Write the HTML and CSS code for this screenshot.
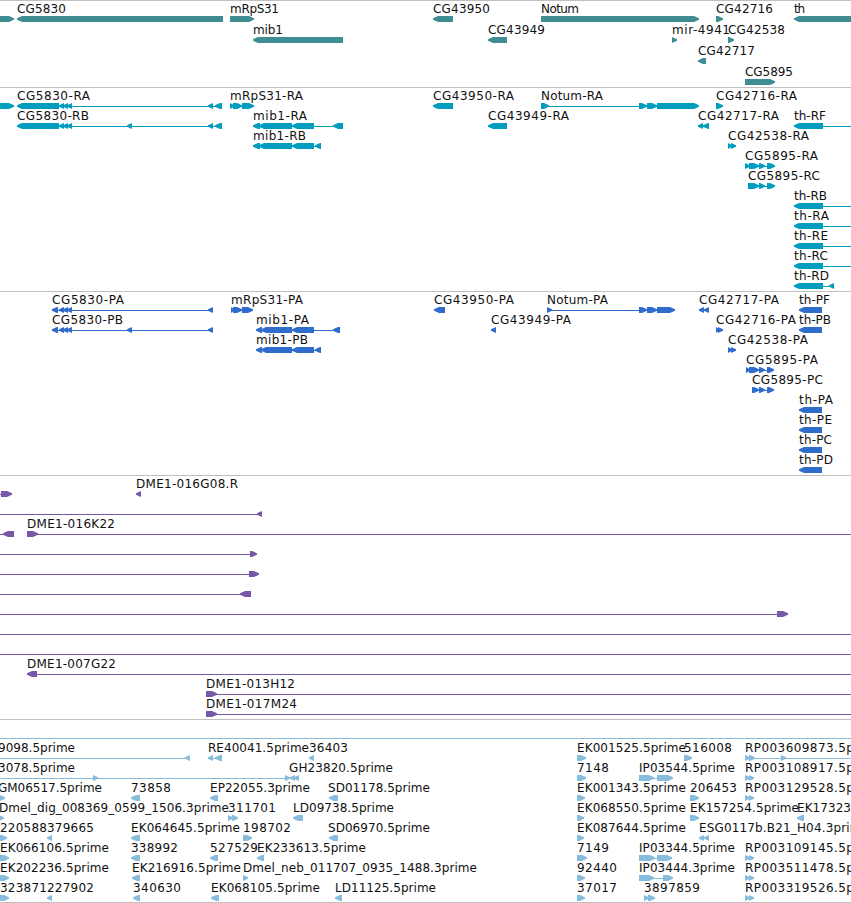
FILE: index.html
```html
<!DOCTYPE html>
<html lang="en">
<head>
    <meta charset="UTF-8">
    <meta name="viewport" content="width=device-width, initial-scale=1.0">
    <title>Genome Tracks</title>
    <link rel="stylesheet" href="styles.css">
    <script src="tracks.js" defer></script>
</head>

<body>
    <main id="track-list">
        <section class="track genes" id="genes"></section>
        <section class="track transcripts" id="transcripts"></section>
        <section class="track proteins" id="proteins"></section>
        <section class="track bacs" id="bacs"></section>
        <section class="track ests" id="ests"></section>
    </main>
</body>
</html>
```

FILE: styles.css
```css
html {
    background-color: white;
    color: black;
    font-family: "DejaVu Sans", sans-serif;
    font-size: 12px;
}

body {
    margin: 0;
    padding: 0;
}

#track-list {
    display: flex;
    flex-direction: column;
    width: 851px;
    overflow: hidden;
}

.track {
    box-sizing: border-box;
    border-top: 1px solid #c0c0c0;
    overflow: hidden;
}

.track svg {
    display: block;
    width: 100%;
    height: 100%;
}

.track text {
    fill: #111;
}

.genes {
    height: 87px;
    fill: #3f8c92;
}

.transcripts {
    height: 204px;
    fill: #009dbf;
}

.proteins {
    height: 184px;
    fill: #306ccb;
}

.bacs {
    height: 244px;
    fill: #7757a7;
}

.ests {
    height: 184px;
    fill: #88bcdf;
    border-bottom: 1px solid #c0c0c0;
}
```

FILE: tracks.js
```js
// feature: [row, strand, name, label start, label end, blocks]
// blocks outside of the view keep the connecting line running to the edge
const L = [-20, -12];
const R = [870, 880];

const genes = [
    [0, '+', '', 0, 0, [[-20, 14]]],
    [0, '-', 'CG5830', 17, 66, [[17, 223]]],
    [0, '+', 'mRpS31', 230, 279, [[230, 254]]],
    [0, '-', 'CG43950', 433, 490, [[433, 453]]],
    [0, '+', 'Notum', 541, 579, [[541, 699]]],
    [0, '+', 'CG42716', 716, 773, [[716, 723]]],
    [0, '-', 'th', 794, 805, [[794, 870]]],
    [1, '-', 'mib1', 253, 283, [[253, 343]]],
    [1, '-', 'CG43949', 488, 545, [[488, 507]]],
    [1, '+', 'mir-4941', 672, 730, [[672, 677]]],
    [1, '+', 'CG42538', 728, 785, [[728, 734]]],
    [2, '-', 'CG42717', 698, 755, [[698, 706]]],
    [3, '+', 'CG5895', 745, 793, [[745, 775]]]
];

const transcripts = [
    [0, '+', '', 0, 0, [[-20, 14]]],
    [0, '-', 'CG5830-RA', 17, 90, [[17, 59], [59, 64], [63, 68], [67, 72], [208, 213], [215, 222]]],
    [0, '+', 'mRpS31-RA', 230, 303, [[230, 234], [233, 242], [242, 254]]],
    [0, '-', 'CG43950-RA', 433, 514, [[433, 453]]],
    [0, '+', 'Notum-RA', 541, 603, [[541, 549], [639, 647], [647, 657], [657, 699]]],
    [0, '+', 'CG42716-RA', 716, 797, [[716, 723]]],
    [1, '-', 'CG5830-RB', 17, 89, [[17, 59], [59, 64], [63, 68], [67, 72], [127, 132], [208, 213], [215, 222]]],
    [1, '-', 'mib1-RA', 253, 307, [[253, 260], [259, 292], [292, 314], [333, 343]]],
    [1, '-', 'CG43949-RA', 488, 569, [[488, 507]]],
    [1, '-', 'CG42717-RA', 698, 779, [[698, 703], [703, 709]]],
    [1, '-', 'th-RF', 794, 826, [[794, 823], R]],
    [2, '-', 'mib1-RB', 253, 306, [[253, 260], [259, 292], [292, 314], [315, 321]]],
    [2, '+', 'CG42538-RA', 728, 809, [[728, 732], [731, 736]]],
    [3, '+', 'CG5895-RA', 745, 818, [[745, 750], [749, 759], [759, 765], [767, 775]]],
    [4, '+', 'CG5895-RC', 748, 820, [[748, 759], [759, 765], [767, 775]]],
    [5, '-', 'th-RB', 794, 827, [[794, 823], R]],
    [6, '-', 'th-RA', 794, 829, [[794, 823], R]],
    [7, '-', 'th-RE', 794, 828, [[794, 823], R]],
    [8, '-', 'th-RC', 794, 828, [[794, 823], R]],
    [9, '-', 'th-RD', 794, 829, [[794, 823], [829, 834]]]
];

const proteins = [
    [0, '-', 'CG5830-PA', 52, 124, [[52, 58], [59, 64], [63, 68], [67, 72], [208, 213]]],
    [0, '+', 'mRpS31-PA', 231, 303, [[231, 234], [233, 242], [242, 253]]],
    [0, '-', 'CG43950-PA', 434, 514, [[434, 445]]],
    [0, '+', 'Notum-PA', 547, 608, [[547, 552], [639, 647], [647, 657], [657, 675]]],
    [0, '-', 'CG42717-PA', 699, 779, [[699, 704], [704, 709]]],
    [0, '-', 'th-PF', 799, 830, [[799, 822]]],
    [1, '-', 'CG5830-PB', 52, 123, [[52, 58], [59, 64], [63, 68], [67, 72], [127, 132], [208, 213]]],
    [1, '-', 'mib1-PA', 256, 309, [[256, 262], [261, 292], [292, 314], [333, 340]]],
    [1, '-', 'CG43949-PA', 491, 571, [[491, 496]]],
    [1, '+', 'CG42716-PA', 716, 796, [[716, 719], [718, 723]]],
    [1, '-', 'th-PB', 799, 831, [[799, 822]]],
    [2, '-', 'mib1-PB', 256, 308, [[256, 262], [261, 292], [292, 314], [315, 321]]],
    [2, '+', 'CG42538-PA', 728, 808, [[728, 732], [731, 736]]],
    [3, '+', 'CG5895-PA', 746, 818, [[746, 750], [749, 759], [759, 765], [767, 774]]],
    [4, '+', 'CG5895-PC', 752, 823, [[752, 759], [759, 765], [767, 774]]],
    [5, '-', 'th-PA', 799, 833, [[799, 822]]],
    [6, '-', 'th-PE', 799, 832, [[799, 822]]],
    [7, '-', 'th-PC', 799, 832, [[799, 822]]],
    [8, '-', 'th-PD', 799, 833, [[799, 822]]]
];

const bacs = [
    [0, '+', '', 0, 0, [L, [1, 12]]],
    [0, '-', 'DME1-016G08.R', 136, 238, [[136, 141]]],
    [1, '-', '', 0, 0, [L, [257, 262]]],
    [2, '-', '', 0, 0, [L, [3, 14]]],
    [2, '+', 'DME1-016K22', 27, 115, [[27, 38], R]],
    [3, '+', '', 0, 0, [L, [250, 257]]],
    [4, '+', '', 0, 0, [L, [249, 259]]],
    [5, '-', '', 0, 0, [L, [240, 251]]],
    [6, '+', '', 0, 0, [L, [777, 788]]],
    [7, '+', '', 0, 0, [L, R]],
    [8, '+', '', 0, 0, [L, R]],
    [9, '-', 'DME1-007G22', 27, 116, [[27, 37], R]],
    [10, '+', 'DME1-013H12', 206, 295, [[206, 217], R]],
    [11, '+', 'DME1-017M24', 206, 297, [[206, 217], R]]
];

const ests = [
    [0, '+', '', 0, 0, [L, R]],

    [1, '-', '9098.5prime', -2, 75, [L, [185, 190]]],
    [1, '-', 'RE40041.5prime', 208, 309, [[208, 213], [215, 222]]],
    [1, '-', '36403', 309, 348, [[309, 314]]],
    [1, '+', 'EK001525.5prime', 577, 686, [[577, 586]]],
    [1, '+', '516008', 684, 732, [[684, 692]]],
    [1, '+', 'RP003609873.5prime', 745, 883, [[745, 750], [749, 755], [781, 786], R]],

    [2, '+', '3078.5prime', -2, 75, [L, [93, 98], [285, 290]]],
    [2, '-', 'GH23820.5prime', 289, 393, [[290, 295], [294, 299]]],
    [2, '+', '7148', 577, 609, [[577, 586]]],
    [2, '+', 'IP03544.5prime', 639, 735, [[639, 654], [657, 673]]],
    [2, '+', 'RP003108917.5prime', 745, 883, [[745, 750], [749, 754]]],

    [3, '+', 'GM06517.5prime', -2, 102, [[-1, 5]]],
    [3, '-', '73858', 131, 171, [[131, 140]]],
    [3, '-', 'EP22055.3prime', 210, 310, [[210, 218]]],
    [3, '-', 'SD01178.5prime', 328, 430, [[329, 338]]],
    [3, '+', 'EK001343.5prime', 577, 686, [[577, 585]]],
    [3, '+', '206453', 690, 737, [[690, 699]]],
    [3, '+', 'RP003129528.5prime', 745, 883, [[745, 750], [749, 754]]],

    [4, '+', 'Dmel_dig_008369_0599_1506.3prime', -1, 229, [[-2, 4]]],
    [4, '+', '311701', 228, 276, [[228, 233], [232, 238]]],
    [4, '-', 'LD09738.5prime', 293, 394, [[293, 303]]],
    [4, '+', 'EK068550.5prime', 577, 686, [[577, 584]]],
    [4, '+', 'EK157254.5prime', 690, 799, [[690, 699]]],
    [4, '-', 'EK17323', 797, 851, [[797, 804]]],

    [5, '+', '220588', 0, 47, [[0, 7]]],
    [5, '-', '379665', 47, 94, [[47, 52]]],
    [5, '-', 'EK064645.5prime', 131, 240, [[131, 140]]],
    [5, '+', '198702', 243, 291, [[243, 252]]],
    [5, '-', 'SD06970.5prime', 328, 430, [[329, 338]]],
    [5, '+', 'EK087644.5prime', 577, 686, [[577, 584]]],
    [5, '-', 'ESG0117b.B21_H04.3prime', 699, 869, [[699, 704], [704, 709]]],

    [6, '+', 'EK066106.5prime', 0, 109, [[0, 9]]],
    [6, '-', '338992', 131, 178, [[131, 140]]],
    [6, '-', '527529', 210, 258, [[210, 218]]],
    [6, '-', 'EK233613.5prime', 257, 366, [[257, 264]]],
    [6, '+', '7149', 577, 609, [[577, 587]]],
    [6, '+', 'IP03344.5prime', 639, 735, [[639, 655], [657, 672]]],
    [6, '+', 'RP003109145.5prime', 745, 883, [[745, 750], [749, 754]]],

    [7, '+', 'EK202236.5prime', 0, 109, [[0, 9]]],
    [7, '-', 'EK216916.5prime', 132, 241, [[132, 140]]],
    [7, '+', 'Dmel_neb_011707_0935_1488.3prime', 243, 477, [[243, 248]]],
    [7, '+', '92440', 577, 617, [[577, 585]]],
    [7, '+', 'IP03444.3prime', 639, 735, [[639, 654], [663, 673]]],
    [7, '+', 'RP003511478.5prime', 745, 883, [[745, 750], [749, 754]]],

    [8, '+', '323871', 0, 47, [[0, 9]]],
    [8, '-', '227902', 47, 94, [[47, 52]]],
    [8, '-', '340630', 133, 181, [[133, 140]]],
    [8, '-', 'EK068105.5prime', 211, 320, [[211, 219]]],
    [8, '-', 'LD11125.5prime', 335, 436, [[335, 342]]],
    [8, '+', '37017', 577, 617, [[577, 585]]],
    [8, '+', '3897859', 644, 700, [[644, 649], [648, 655]]],
    [8, '+', 'RP003319526.5prime', 745, 883, [[745, 750], [749, 754]]]
];

// one block with a blunt 5px head pointing along the strand
function blockPath(a, b, y, strand) {
    const tip = (strand === '+') ? b : a;
    const tail = (strand === '+') ? a : b;
    const s = (strand === '+') ? -1 : 1;
    const neck = tip + s * Math.min(5, b - a);
    return `M${tail} ${y}H${neck}L${tip} ${y + 2.2}V${y + 3.8}L${neck} ${y + 6}H${tail}Z`;
}

function drawTrack(id, features, rowHeight) {
    let shapes = "";
    let labels = "";
    features.forEach(([row, strand, name, x1, x2, blocks]) => {
        const top = row * rowHeight;
        const start = blocks[0][0];
        const end = blocks[blocks.length - 1][1];
        if (blocks.length > 1) {
            shapes += `<rect x="${start + 1}" y="${top + 18}" width="${end - start - 2}" height="1"/>`;
        }
        blocks.forEach(([a, b]) => {
            shapes += `<path d="${blockPath(a, b, top + 15, strand)}"/>`;
        });
        if (name) {
            labels += `<text x="${x1}" y="${top + 12}" textLength="${x2 - x1}">${name}</text>`;
        }
    });
    document.getElementById(id).innerHTML = `<svg>${shapes}${labels}</svg>`;
}

drawTrack('genes', genes, 21);
drawTrack('transcripts', transcripts, 20);
drawTrack('proteins', proteins, 20);
drawTrack('bacs', bacs, 20);
drawTrack('ests', ests, 20);
```
